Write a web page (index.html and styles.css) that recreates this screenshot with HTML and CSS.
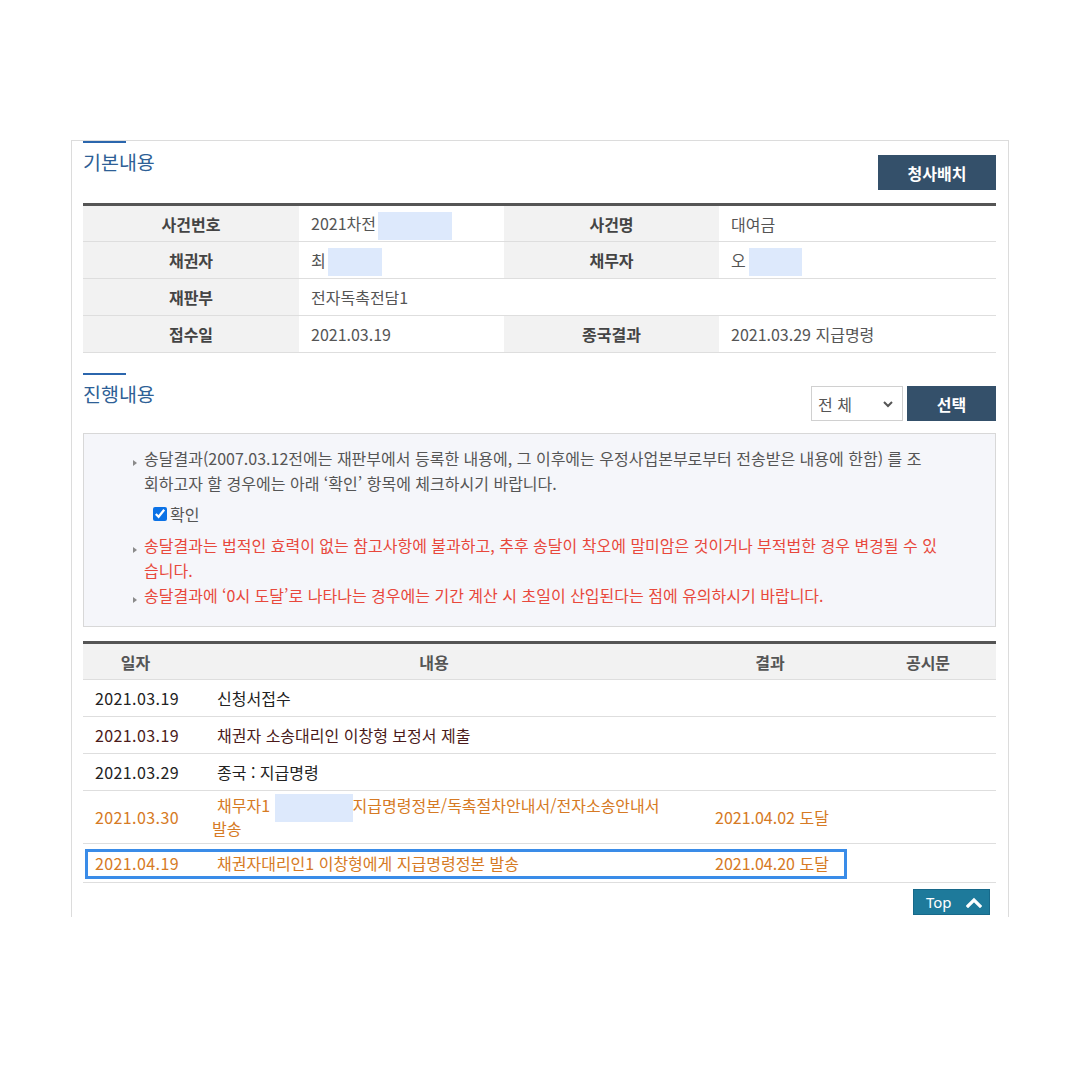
FILE: index.html
```html
<!DOCTYPE html>
<html lang="ko">
<head>
<meta charset="utf-8">
<title>사건 진행 내용</title>
<link rel="stylesheet" href="styles.css">
</head>
<body>
<div class="wrap">
  <section class="sec">
    <div class="sec-head head-1">
      <h2 class="sec-title">기본내용</h2>
      <button class="btn-dark btn-hall">청사배치</button>
    </div>
    <table class="info">
      <colgroup><col class="ic1"><col class="ic2"><col class="ic3"><col class="ic4"></colgroup>
      <tr><th>사건번호</th><td>2021차전<span class="mask m74"></span></td><th>사건명</th><td>대여금</td></tr>
      <tr><th>채권자</th><td>최<span class="mask m54"></span></td><th>채무자</th><td>오<span class="mask m53"></span></td></tr>
      <tr><th>재판부</th><td colspan="3">전자독촉전담1</td></tr>
      <tr><th>접수일</th><td>2021.03.19</td><th>종국결과</th><td>2021.03.29 지급명령</td></tr>
    </table>
  </section>

  <section class="sec sec-2">
    <div class="sec-head head-2">
      <h2 class="sec-title">진행내용</h2>
      <div class="controls">
        <div class="select">전 체<svg class="chev" width="12" height="8" viewBox="0 0 12 8"><path d="M2 2l4 4 4-4" fill="none" stroke="#555" stroke-width="2"/></svg></div>
        <button class="btn-dark btn-sel">선택</button>
      </div>
    </div>
    <div class="notice">
      <p class="item">송달결과(2007.03.12전에는 재판부에서 등록한 내용에, 그 이후에는 우정사업본부로부터 전송받은 내용에 한함) 를 조<br>회하고자 할 경우에는 아래 ‘확인’ 항목에 체크하시기 바랍니다.</p>
      <label class="check"><input type="checkbox" checked>확인</label>
      <p class="item red first-red">송달결과는 법적인 효력이 없는 참고사항에 불과하고, 추후 송달이 착오에 말미암은 것이거나 부적법한 경우 변경될 수 있<br>습니다.</p>
      <p class="item red">송달결과에 ‘0시 도달’로 나타나는 경우에는 기간 계산 시 초일이 산입된다는 점에 유의하시기 바랍니다.</p>
    </div>

    <table class="list">
      <colgroup><col class="lc1"><col class="lc2"><col class="lc3"><col class="lc4"></colgroup>
      <thead>
        <tr><th>일자</th><th>내용</th><th>결과</th><th>공시문</th></tr>
      </thead>
      <tbody>
        <tr><td class="date">2021.03.19</td><td class="cont">신청서접수</td><td></td><td></td></tr>
        <tr class="maroon"><td class="date">2021.03.19</td><td class="cont">채권자 소송대리인 이창형 보정서 제출</td><td></td><td></td></tr>
        <tr><td class="date">2021.03.29</td><td class="cont">종국 : 지급명령</td><td></td><td></td></tr>
        <tr class="orange tall"><td class="date">2021.03.30</td><td class="cont tight">채무자1 <span class="mask m78"></span>지급명령정본/독촉절차안내서/전자소송안내서<br>발송</td><td class="res">2021.04.02 도달</td><td></td></tr>
        <tr class="orange last"><td class="date hl-cell">2021.04.19<span class="hl"></span></td><td class="cont">채권자대리인1 이창형에게 지급명령정본 발송</td><td class="res">2021.04.20 도달</td><td></td></tr>
      </tbody>
    </table>
    <div class="top-row">
      <a class="top-btn" href="#">Top<svg width="16" height="12" viewBox="0 0 16 12"><path d="M2 10l6-6 6 6" fill="none" stroke="#fff" stroke-width="3.2" stroke-linecap="square"/></svg></a>
    </div>
  </section>
</div>
</body>
</html>
```
FILE: styles.css
```css
* { box-sizing: border-box; }
html, body { margin: 0; padding: 0; background: #fff; }
body {
  font-family: "Noto Sans CJK KR", "Noto Sans", sans-serif;
  font-size: 16px;
  color: #555;
}
.wrap {
  margin: 140px 0 0 71px;
  width: 938px;
  height: 777px;
  border: 1px solid #dcdcdc;
  border-bottom: none;
  padding: 0 12px 0 11px;
}
.sec-head {
  display: flex;
  justify-content: space-between;
  align-items: flex-start;
}
.head-1 { height: 62px; }
.head-2 { height: 60px; }
.sec-2 { margin-top: 20px; }
.sec-title {
  position: relative;
  margin: 0;
  padding-top: 9px;
  font-size: 19.5px;
  line-height: 24px;
  font-weight: normal;
  color: #2e5f96;
}
.sec-title::before {
  content: "";
  position: absolute;
  left: 0; top: 0;
  width: 43px; height: 2px;
  background: #2b66ad;
}
.btn-dark {
  border: none;
  background: #34506a;
  color: #fff;
  font-family: inherit;
  font-size: 16px;
  font-weight: bold;
  height: 35px;
  padding: 0;
  cursor: pointer;
}
.btn-hall { width: 118px; margin-top: 14px; }
.controls { display: flex; gap: 4px; margin-top: 13px; }
.btn-sel { width: 89px; }
.select {
  width: 92px; height: 35px;
  border: 1px solid #d0d0d0;
  background: #fff;
  display: flex;
  align-items: center;
  justify-content: space-between;
  padding: 0 8px 0 6px;
  color: #555;
  font-size: 16px;
}
.chev { margin-top: 1px; }

table { border-collapse: collapse; width: 100%; table-layout: fixed; }
.info { border-top: 3px solid #555; }
.ic1 { width: 216px; } .ic2 { width: 205px; } .ic3 { width: 215px; } .ic4 { width: 277px; }
.info th, .info td {
  height: 37px;
  border-bottom: 1px solid #dedede;
  padding: 0;
  line-height: 20px;
}
.info th { background: #f2f2f2; color: #444; font-weight: bold; text-align: center; }
.info td { padding-left: 12px; color: #555; }
.mask {
  display: inline-block;
  height: 28px;
  margin: -6px 0;
  vertical-align: middle;
  background: #dde9fc;
}
.m74 { width: 74px; margin-left: 2px; }
.m54 { width: 54px; margin-left: 2px; }
.m53 { width: 53px; margin-left: 3px; }
.m78 { width: 78px; }

.notice {
  height: 194px;
  border: 1px solid #d8d8d8;
  background: #f5f6fa;
  padding: 12px 20px 0 60px;
}
.item {
  position: relative;
  margin: 0;
  line-height: 25px;
  color: #555;
}
.item::before {
  content: "";
  position: absolute;
  left: -11px; top: 14px;
  border-left: 4px solid #8a8a8a;
  border-top: 3px solid transparent;
  border-bottom: 3px solid transparent;
}
.item.red { color: #e8483c; }
.first-red { margin-top: 7px; }
.check {
  display: flex;
  align-items: center;
  height: 24px;
  margin-top: 6px;
  padding-left: 9px;
  color: #555;
}
.check input {
  width: 14px; height: 14px;
  margin: 0 3px 0 0;
  accent-color: #0b72e6;
}

.list { margin-top: 14px; border-top: 3px solid #555; }
.lc1 { width: 105px; } .lc2 { width: 492px; } .lc3 { width: 180px; } .lc4 { width: 136px; }
.list th {
  height: 37px;
  background: #f2f2f2;
  color: #555;
  font-weight: bold;
  text-align: center;
  border-bottom: 1px solid #dedede;
  padding: 0;
}
.list td {
  height: 37px;
  border-bottom: 1px solid #dedede;
  padding: 0;
  color: #222;
  line-height: 20px;
}
.list td.date { padding-left: 12px; letter-spacing: 0.4px; }
.list td.cont { padding-left: 24px; text-indent: 5px; }
.list td.cont.tight { line-height: 23px; }
.list td.res { padding-left: 35px; }
.list tr.maroon td { color: #4a1a1a; }
.list tr.orange td { color: #d67a24; }
.list tr.tall td { height: 53px; }
.list tr.last td { height: 39px; }
.hl-cell { position: relative; }
.hl {
  position: absolute;
  left: 2px; top: 5px;
  width: 762px; height: 30px;
  border: 3px solid #3a8ce8;
  pointer-events: none;
}
.top-row { display: flex; justify-content: flex-end; padding: 6px 6px 0 0; }
.top-btn {
  display: flex;
  align-items: center;
  justify-content: space-between;
  width: 77px; height: 26px;
  padding: 0 7px 0 12px;
  background: #1e7a9b;
  border: 1px solid #17698a;
  color: #fff;
  text-decoration: none;
  font-family: "Noto Sans", sans-serif;
  font-size: 15px;
}
```
